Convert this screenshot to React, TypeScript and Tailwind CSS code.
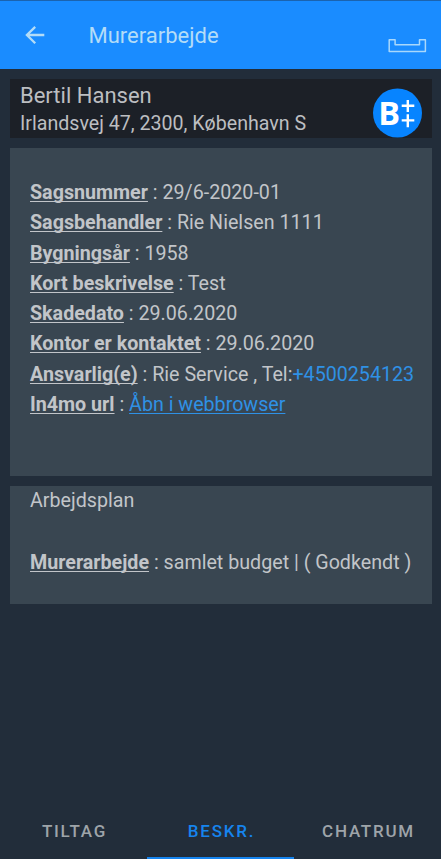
interface Detail {
  label: string;
  value: string;
  phone?: string;
  link?: string;
}

const details: Detail[] = [
  { label: "Sagsnummer", value: "29/6-2020-01" },
  { label: "Sagsbehandler", value: "Rie Nielsen 1111" },
  { label: "Bygningsår", value: "1958" },
  { label: "Kort beskrivelse", value: "Test" },
  { label: "Skadedato", value: "29.06.2020" },
  { label: "Kontor er kontaktet", value: "29.06.2020" },
  { label: "Ansvarlig(e)", value: "Rie Service , Tel:", phone: "+4500254123" },
  { label: "In4mo url", value: "", link: "Åbn i webbrowser" },
];

const tabs = ["TILTAG", "BESKR.", "CHATRUM"];

function Label({ children }: { children: string }) {
  return (
    <span className="font-bold underline decoration-1 underline-offset-2 [text-decoration-skip-ink:none]">
      {children}
    </span>
  );
}

function Header() {
  return (
    <header className="flex h-[69px] shrink-0 items-center border-t border-[#1b63ae] bg-[#1a8cff] pl-[25px] pr-[14px] pt-[2px]">
      <button aria-label="Tilbage">
        <svg width="20" height="20" viewBox="0 0 20 20" fill="none" stroke="#b3dcf7" strokeWidth="2.3" className="block">
          <path d="M19.3 9H2M10.2 .9L1.9 9l8.3 8.3" />
        </svg>
      </button>
      <h1 className="ml-[43.5px] flex-1 text-[22px] leading-7 text-[#b3dcf7]">Murerarbejde</h1>
      <svg width="39" height="15" viewBox="0 0 39 15" fill="none" stroke="#a9d8fb" strokeWidth="1.5" className="mt-[19px] block">
        <path d="M1.2 1.8h5.9v5h24.4v-5h5.9v11.8H1.2z" strokeLinejoin="round" />
      </svg>
    </header>
  );
}

function Customer() {
  return (
    <section className="flex h-[59px] items-center justify-between bg-[#1c2027] pl-[10px] pr-[10px] text-[#bcbec1]">
      <div>
        <p className="pt-px text-[22px] leading-7">Bertil Hansen</p>
        <p className="text-[19.63px] leading-[27px]">Irlandsvej 47, 2300, København S</p>
      </div>
      <svg width="50" height="50" viewBox="0 0 50 50" className="mt-2 block shrink-0">
        <circle cx="25.5" cy="25" r="24.5" fill="#0784ff" />
        <text x="6.3" y="36.9" fill="#fff" fontFamily="Open Sans" fontWeight="700" fontSize="32.5">
          B
        </text>
        <path d="M29.7 17.8h12.6M35.8 12v11.9M29.7 32.4h12.6M35.8 26.3v13" stroke="#fff" strokeWidth="2.4" />
      </svg>
    </section>
  );
}

export default function App() {
  return (
    <div className="flex h-screen w-full flex-col overflow-hidden bg-[#222d3a] font-[Roboto,sans-serif]">
      <Header />

      <main className="flex flex-1 flex-col gap-[10px] pl-[10px] pr-[9px] pt-[10px]">
        <Customer />

        <section className="h-[328px] bg-[#394651] px-5 pt-[30px] text-[19.68px] leading-[30.25px] whitespace-nowrap text-[#c2c5c9]">
          {details.map((item) => (
            <p key={item.label}>
              <Label>{item.label}</Label> : {item.value}
              {item.phone && <a className="text-[#2f91e5]">{item.phone}</a>}
              {item.link && (
                <a className="text-[#2f91e5] underline decoration-1 underline-offset-2 [text-decoration-skip-ink:none]">
                  {item.link}
                </a>
              )}
            </p>
          ))}
        </section>

        <section className="h-[118px] bg-[#394651] px-5 text-[19.68px] leading-[30px] whitespace-nowrap text-[#c2c5c9]">
          <h2>Arbejdsplan</h2>
          <p className="mt-[32px]">
            <Label>Murerarbejde</Label> : samlet budget | ( Godkendt )
          </p>
        </section>
      </main>

      <nav className="grid h-[56px] shrink-0 grid-cols-3 text-[17px] font-medium tracking-[1.75px]">
        {tabs.map((tab) => (
          <button
            key={tab}
            className={
              tab === "BESKR."
                ? "border-b-2 border-[#1684ee] pl-0.5 pt-1 text-[#1684ee]"
                : "border-b-2 border-transparent pl-0.5 pt-1 text-[#9ea4a9]"
            }
          >
            {tab}
          </button>
        ))}
      </nav>
    </div>
  );
}
